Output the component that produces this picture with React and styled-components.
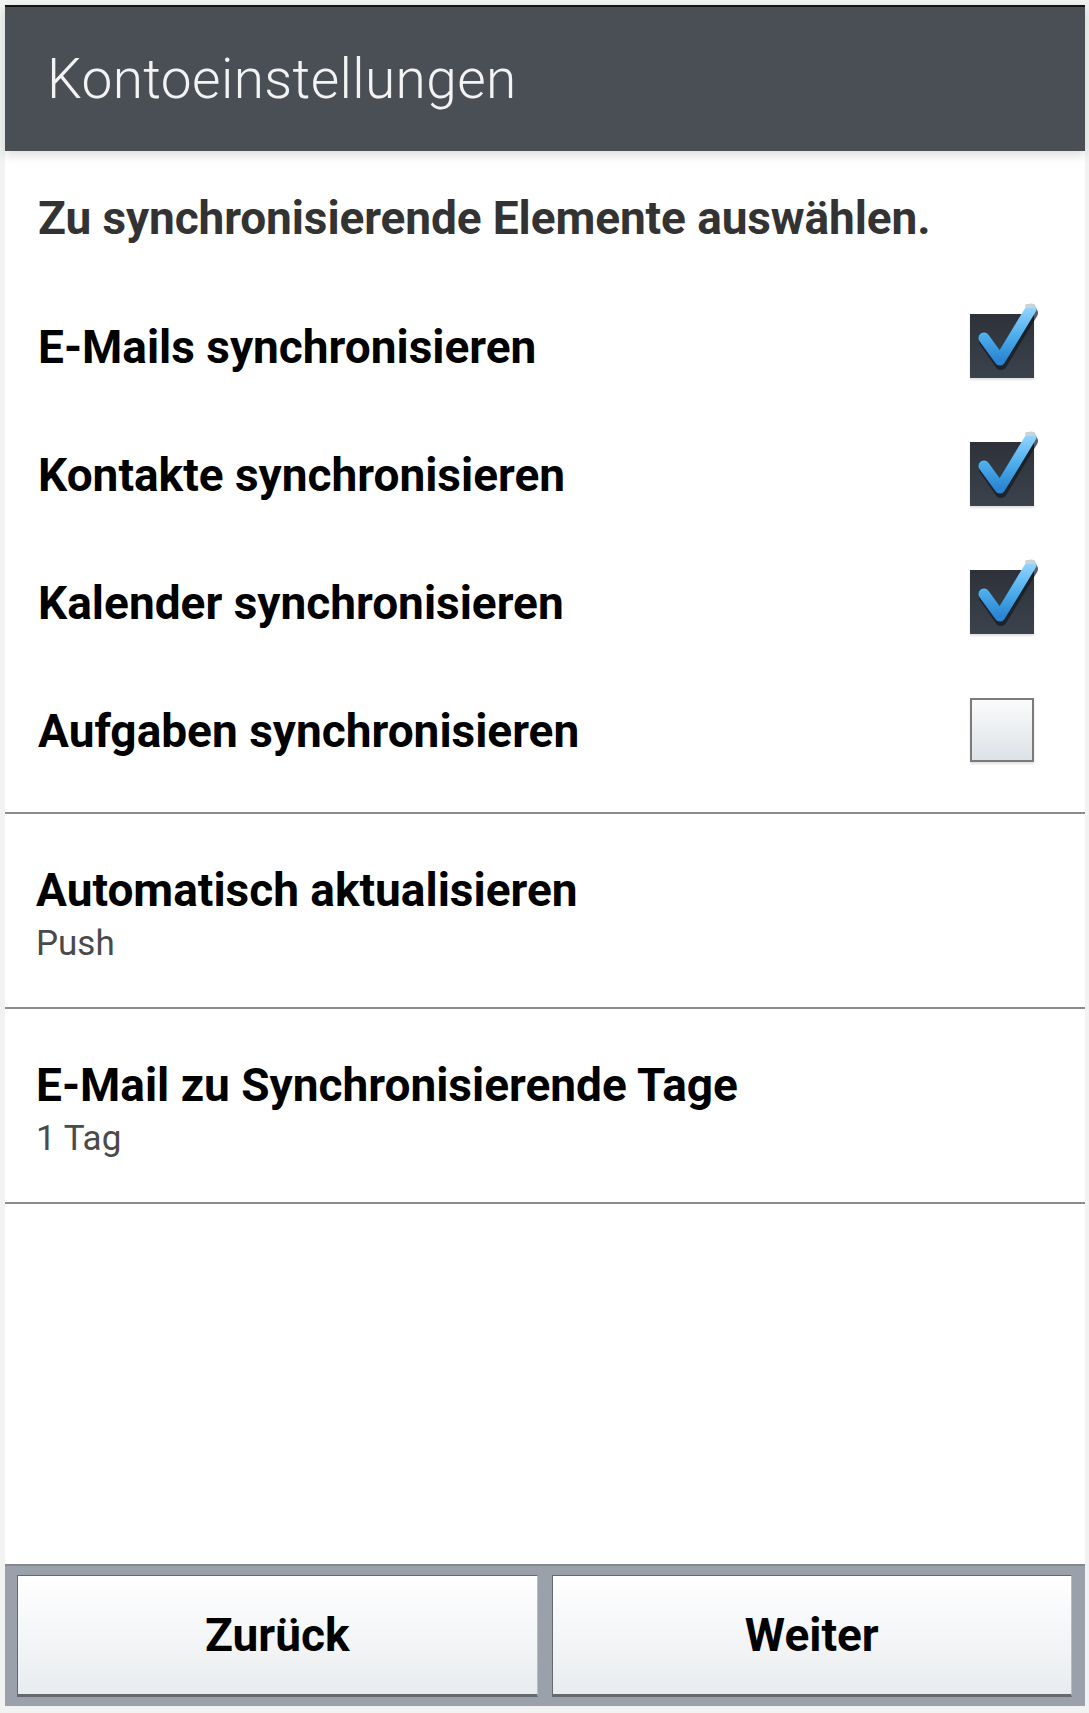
import React, { useState } from "react";
import styled, { createGlobalStyle } from "styled-components";

const GlobalStyle = createGlobalStyle`
  * {
    box-sizing: border-box;
  }
  body {
    margin: 0;
    background: #f2f2f2;
    font-family: Roboto, "Liberation Sans", Arial, sans-serif;
  }
`;

const Frame = styled.div`
  width: 1089px;
  height: 1713px;
  display: flex;
  flex-direction: column;
  padding: 5px 4px 7px 5px;
  background: #f1f2f2;
`;

const Screen = styled.div`
  flex: 1;
  display: flex;
  flex-direction: column;
  background: #ffffff;
`;

const Header = styled.header`
  height: 146px;
  flex: 0 0 auto;
  display: flex;
  align-items: center;
  padding-left: 42px;
  background: #4a4e55;
  border-top: 2px solid #141414;
  box-shadow: 0 4px 10px rgba(0, 0, 0, 0.14);
  position: relative;
  z-index: 1;
  h1 {
    margin: 0;
    font-size: 55px;
    font-weight: 300;
    color: #f3f3f3;
    letter-spacing: 0.4px;
  }
`;

const Content = styled.main`
  flex: 1;
  display: flex;
  flex-direction: column;
`;

const Intro = styled.p`
  margin: 0;
  padding: 39px 0 0 33px;
  font-size: 46px;
  line-height: 56px;
  font-weight: 700;
  color: #333333;
  letter-spacing: -0.1px;
`;

const SyncList = styled.ul`
  list-style: none;
  margin: 37px 0 17px;
  padding: 0;
`;

const SyncRow = styled.li`
  height: 128px;
  display: flex;
  align-items: center;
  justify-content: space-between;
  padding: 0 51px 0 33px;
  cursor: pointer;
  span {
    font-size: 46px;
    font-weight: 700;
    color: #000000;
  }
`;

const Box = styled.div`
  position: relative;
  width: 64px;
  height: 64px;
  flex: 0 0 auto;
  margin-top: -2px;
  border: ${({ checked }) => (checked ? "none" : "2px solid #7b7b7b")};
  background: ${({ checked }) =>
    checked
      ? "linear-gradient(#2d323a, #3c424b)"
      : "linear-gradient(#fbfbfb, #dde2e7)"};
  box-shadow: 0 2px 2px rgba(0, 0, 0, 0.12);
  svg {
    position: absolute;
    left: 0;
    top: -13px;
    overflow: visible;
  }
`;

const Divider = styled.hr`
  margin: 0;
  border: none;
  height: 2px;
  background: #8b8b8b;
`;

const Setting = styled.div`
  padding: 50px 0 43px 31px;
  h2 {
    margin: 0 0 8px;
    font-size: 46px;
    line-height: 52px;
    font-weight: 700;
    color: #000000;
  }
  p {
    margin: 0;
    font-size: 35px;
    line-height: 40px;
    color: #4a4a4a;
  }
`;

const Spacer = styled.div`
  flex: 1;
`;

const ButtonBar = styled.footer`
  flex: 0 0 auto;
  height: 142px;
  display: flex;
  gap: 14px;
  padding: 9px 13px 9px 12px;
  background: #9ba1aa;
  border-top: 2px solid #85898f;
`;

const BarButton = styled.button`
  flex: 1;
  font-family: Roboto, "Liberation Sans", Arial, sans-serif;
  font-size: 46px;
  font-weight: 700;
  color: #000000;
  border: 1px solid #646970;
  border-bottom-width: 3px;
  border-right-color: #b8bcc2;
  background: linear-gradient(#ffffff, #e9ecef);
  cursor: pointer;
`;

const CheckMark = () => (
  <svg width="68" height="72" viewBox="0 0 68 72">
    <defs>
      <linearGradient id="tick" x1="0" y1="0" x2="0" y2="1">
        <stop offset="0" stopColor="#8fd3fb" />
        <stop offset="0.5" stopColor="#4fb0ee" />
        <stop offset="1" stopColor="#2a86d2" />
      </linearGradient>
    </defs>
    <polyline
      points="15,40 31,63 62,12"
      fill="none"
      stroke="#121820"
      strokeOpacity="0.7"
      strokeWidth="12"
      strokeLinecap="round"
      strokeLinejoin="round"
    />
    <polyline
      points="14,37 30,59 61,8"
      fill="none"
      stroke="url(#tick)"
      strokeWidth="11"
      strokeLinecap="round"
      strokeLinejoin="round"
    />
    <path
      d="M57 5 L63 5"
      stroke="#c9d3da"
      strokeWidth="4"
      strokeLinecap="round"
    />
  </svg>
);

const items = [
  { id: "mail", label: "E-Mails synchronisieren", on: true },
  { id: "contacts", label: "Kontakte synchronisieren", on: true },
  { id: "calendar", label: "Kalender synchronisieren", on: true },
  { id: "tasks", label: "Aufgaben synchronisieren", on: false },
];

const App = () => {
  const [sync, setSync] = useState(
    items.reduce((acc, item) => ({ ...acc, [item.id]: item.on }), {})
  );

  const toggle = (id) => setSync({ ...sync, [id]: !sync[id] });

  return (
    <Frame>
      <GlobalStyle />
      <Screen>
        <Header>
          <h1>Kontoeinstellungen</h1>
        </Header>
        <Content>
          <Intro>Zu synchronisierende Elemente auswählen.</Intro>
          <SyncList>
            {items.map((item) => (
              <SyncRow key={item.id} onClick={() => toggle(item.id)}>
                <span>{item.label}</span>
                <Box checked={sync[item.id]}>
                  {sync[item.id] && <CheckMark />}
                </Box>
              </SyncRow>
            ))}
          </SyncList>
          <Divider />
          <Setting>
            <h2>Automatisch aktualisieren</h2>
            <p>Push</p>
          </Setting>
          <Divider />
          <Setting>
            <h2>E-Mail zu Synchronisierende Tage</h2>
            <p>1 Tag</p>
          </Setting>
          <Divider />
          <Spacer />
        </Content>
        <ButtonBar>
          <BarButton type="button">Zurück</BarButton>
          <BarButton type="button">Weiter</BarButton>
        </ButtonBar>
      </Screen>
    </Frame>
  );
};

export default App;
